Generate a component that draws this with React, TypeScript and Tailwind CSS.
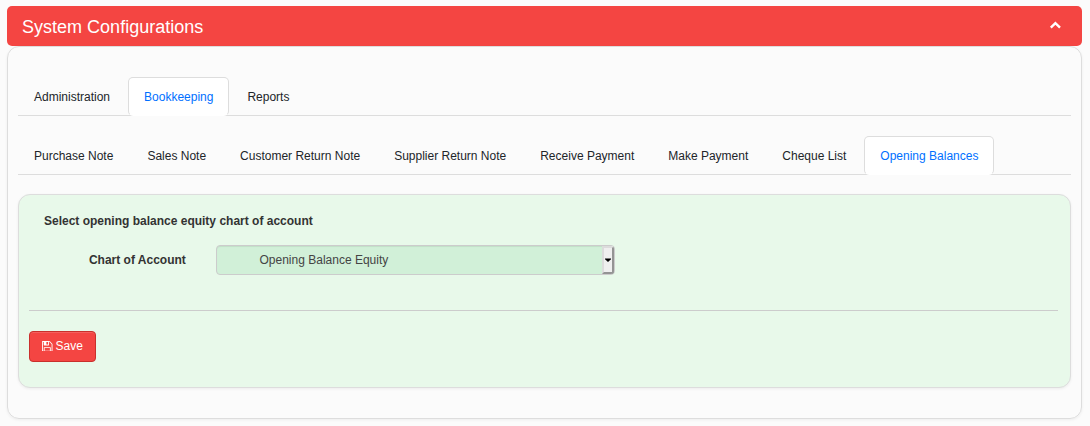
import React from "react";

function Tabs({ items, active, className }: { items: string[]; active: string; className: string }) {
  return (
    <nav className={`flex h-[39px] gap-0.5 border-b border-[#ddd] ${className}`}>
      {items.map((item) => (
        <a
          key={item}
          className={
            item === active
              ? "h-[39px] shrink-0 whitespace-nowrap rounded-[5px] border border-[#ddd] border-b-transparent bg-white bg-clip-border px-[15px] pt-[11px] leading-[17px] text-[#0070ff]"
              : "h-[39px] shrink-0 whitespace-nowrap border border-transparent px-[15px] pt-[11px] leading-[17px] text-[#212529]"
          }
        >
          {item}
        </a>
      ))}
    </nav>
  );
}

function FloppyIcon() {
  return (
    <svg viewBox="0 128 1536 1536" className="mt-px h-[10.5px] w-[10.5px]" fill="currentColor">
      <path d="M384 1536h768v-384h-768v384zm896 0h128v-896q0-14-10-38.5t-20-34.5l-281-281q-10-10-34-20t-39-10v416q0 40-28 68t-68 28h-576q-40 0-68-28t-28-68v-416h-128v1280h128v-416q0-40 28-68t68-28h832q40 0 68 28t28 68v416zm-384-928v-320q0-13-9.5-22.5t-22.5-9.5h-192q-13 0-22.5 9.5t-9.5 22.5v320q0 13 9.5 22.5t22.5 9.5h192q13 0 22.5-9.5t9.5-22.5zm640 32v928q0 40-28 68t-68 28h-1344q-40 0-68-28t-28-68v-1344q0-40 28-68t68-28h928q40 0 88 20t76 48l280 280q28 28 48 76t20 88z" />
    </svg>
  );
}

export default function App() {
  return (
    <div className="h-[426px] bg-[#fbfbfb] pl-[7px] pr-2 pt-1.5 font-['Liberation_Sans',Arial,sans-serif] text-xs text-[#333]">
      <header className="flex h-10 items-center justify-between rounded-[5px] bg-[#f44542] pl-[15px] pr-[21px] text-white">
        <h1 className="pt-0.5 text-[18px] leading-5 tracking-[0.01px]">System Configurations</h1>
        <svg viewBox="0 0 12 8" className="mb-[3px] h-2 w-3" fill="none" stroke="currentColor" strokeWidth="2.4">
          <path d="M1.8 6.6 6.4 2.2l4.6 4.4" />
        </svg>
      </header>
      <main className="h-[373px] rounded-[12px] border border-[#ddd] px-2.5 pt-[30px] shadow-[0_1px_3px_rgba(0,0,0,0.06)]">
        <Tabs items={["Administration", "Bookkeeping", "Reports"]} active="Bookkeeping" className="" />
        <Tabs
          items={["Purchase Note", "Sales Note", "Customer Return Note", "Supplier Return Note", "Receive Payment", "Make Payment", "Cheque List", "Opening Balances"]}
          active="Opening Balances"
          className="mt-5"
        />
        <section className="mt-[19px] h-[194px] rounded-[12px] border border-[#ddd] bg-[#e8f9ea] pl-2.5 pr-3 pt-[18px] shadow-[0_1px_3px_rgba(0,0,0,0.06)]">
          <h2 className="pl-[15px] font-bold leading-[17px]">Select opening balance equity chart of account</h2>
          <div className="mt-[15px] flex h-[30px] items-center">
            <label className="w-[157px] pr-[0.2px] text-right font-bold">Chart of Account</label>
            <div className="ml-[30px] flex h-[30px] w-[399px] justify-between overflow-hidden rounded-[4px] border border-[#ccc] bg-[#d1f0d8] pl-[42.5px] text-[#444] shadow-[inset_0_1px_1px_rgba(0,0,0,0.075)]">
              <span className="leading-7">Opening Balance Equity</span>
              <span className="flex w-3 items-center justify-center border-2 border-b-[#949494] border-l-[#dcdcdc] border-r-[#949494] border-t-[#dcdcdc] bg-[#efefef]">
                <svg viewBox="0 0 6 4" className="h-1 w-1.5 shrink-0">
                  <path d="M0 .5h6v.7L3 4 0 1.2z" fill="#000" />
                </svg>
              </span>
            </div>
          </div>
          <hr className="mt-[35px] border-[#ccc]" />
          <button className="mt-5 flex h-[31px] w-[67px] items-center justify-center gap-[3px] rounded-[4px] border border-[#c9302c] bg-[#f44542] pb-0.5 text-white shadow-[inset_0_1px_0_rgba(255,255,255,0.15)]">
            <FloppyIcon />
            <span>Save</span>
          </button>
        </section>
      </main>
    </div>
  );
}
